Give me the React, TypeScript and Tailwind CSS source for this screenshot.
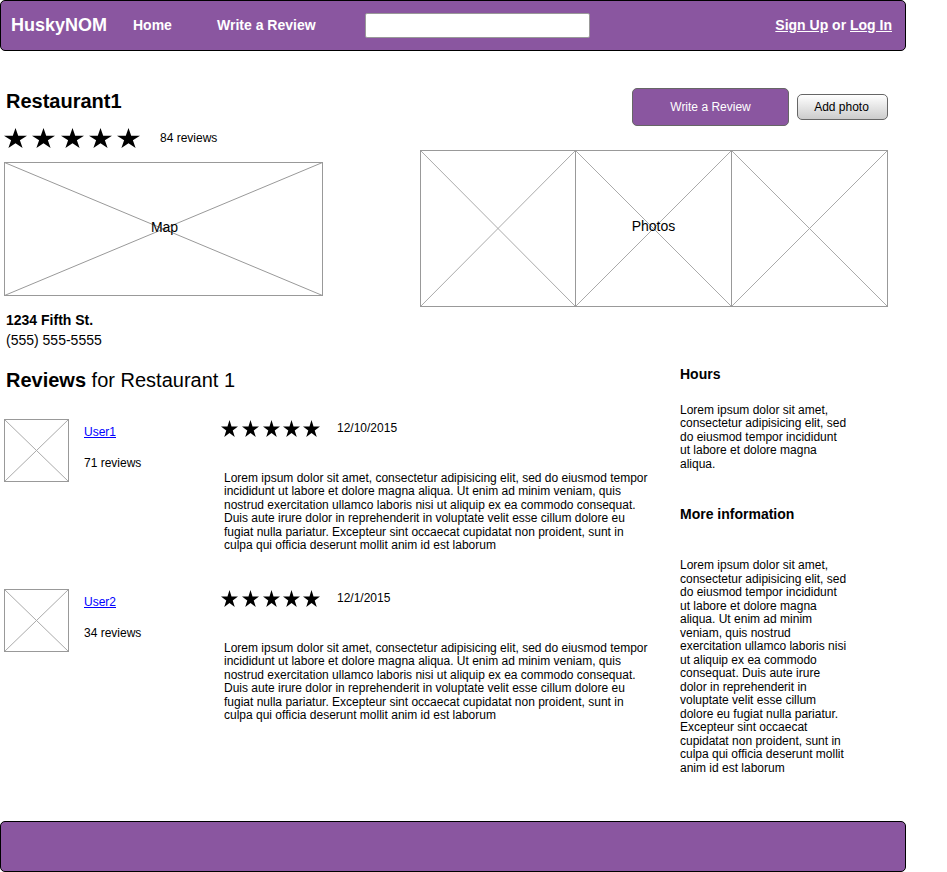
const STAR =
  "50,0 61.8,38.2 100,38.2 69.1,61.8 80.9,100 50,76.4 19.1,100 30.9,61.8 0,38.2 38.2,38.2";

function Star({ className }: { className: string }) {
  return (
    <svg viewBox="0 0 100 100" preserveAspectRatio="none" className={`shrink-0 ${className}`}>
      <polygon points={STAR} fill="#000" />
    </svg>
  );
}

function Placeholder({
  width,
  height,
  cross = "#aaa",
  className = "",
}: {
  width: number;
  height: number;
  cross?: string;
  className?: string;
}) {
  return (
    <svg width={width} height={height} className={`block shrink-0 ${className}`} fill="none">
      <path
        d={`M0.5 0.5L${width - 0.5} ${height - 0.5}M0.5 ${height - 0.5}L${width - 0.5} 0.5`}
        stroke={cross}
      />
      <rect x="0.5" y="0.5" width={width - 1} height={height - 1} stroke="#999" />
    </svg>
  );
}

function Lines({ lines }: { lines: string[] }) {
  return (
    <p className="text-[12px] leading-[13.5px] whitespace-nowrap">
      {lines.map((line) => (
        <span key={line} className="block">
          {line}
        </span>
      ))}
    </p>
  );
}

const reviewText = [
  "Lorem ipsum dolor sit amet, consectetur adipisicing elit, sed do eiusmod tempor",
  "incididunt ut labore et dolore magna aliqua. Ut enim ad minim veniam, quis",
  "nostrud exercitation ullamco laboris nisi ut aliquip ex ea commodo consequat.",
  "Duis aute irure dolor in reprehenderit in voluptate velit esse cillum dolore eu",
  "fugiat nulla pariatur. Excepteur sint occaecat cupidatat non proident, sunt in",
  "culpa qui officia deserunt mollit anim id est laborum",
];

const hoursText = [
  "Lorem ipsum dolor sit amet,",
  "consectetur adipisicing elit, sed",
  "do eiusmod tempor incididunt",
  "ut labore et dolore magna",
  "aliqua.",
];

const infoText = [
  "Lorem ipsum dolor sit amet,",
  "consectetur adipisicing elit, sed",
  "do eiusmod tempor incididunt",
  "ut labore et dolore magna",
  "aliqua. Ut enim ad minim",
  "veniam, quis nostrud",
  "exercitation ullamco laboris nisi",
  "ut aliquip ex ea commodo",
  "consequat. Duis aute irure",
  "dolor in reprehenderit in",
  "voluptate velit esse cillum",
  "dolore eu fugiat nulla pariatur.",
  "Excepteur sint occaecat",
  "cupidatat non proident, sunt in",
  "culpa qui officia deserunt mollit",
  "anim id est laborum",
];

function Review({ user, count, date }: { user: string; count: string; date: string }) {
  return (
    <article className="flex h-[170px] pl-1">
      <Placeholder width={65} height={63} />
      <div className="w-[152px] shrink-0 pt-[5px] pl-[15px] text-[12px]">
        <a href="#" className="block leading-4 text-[#0000ff] underline">
          {user}
        </a>
        <p className="mt-[15px] leading-4">{count}</p>
      </div>
      <div>
        <div className="flex h-[18px] items-center">
          <div className="flex h-[17px] w-[100px] items-center pl-[0.3px]">
            <Star className="h-[17px] w-[17px]" />
            <Star className="ml-1 h-[17px] w-[17px]" />
            <Star className="ml-1 h-[17px] w-[17px]" />
            <Star className="ml-[3px] h-[17px] w-[17px]" />
            <Star className="ml-[3px] h-[17px] w-[17px]" />
          </div>
          <span className="pl-4 text-[12px] leading-4">{date}</span>
        </div>
        <div className="pt-[34.5px] pl-[3px]">
          <Lines lines={reviewText} />
        </div>
      </div>
    </article>
  );
}

export default function App() {
  return (
    <div className="min-h-[872px] bg-white">
      <div className="flex h-[872px] w-[906px] flex-col font-['Liberation_Sans',Arial,sans-serif] text-black">
        <header className="flex h-[51px] shrink-0 items-center rounded-[5px] border border-black bg-[#8a56a0] pl-[10px] pr-[13px] font-bold whitespace-nowrap text-white">
          <a className="w-[122px] text-[18px]">HuskyNOM</a>
          <a className="w-[84px] text-[14px]">Home</a>
          <a className="w-[148px] text-[14px]">Write a Review</a>
          <input className="h-[25px] w-[225px] rounded-[2px] border border-[#999] bg-white" />
          <span className="ml-auto text-[14px]">
            <a className="underline">Sign Up</a> or <a className="underline">Log In</a>
          </span>
        </header>

        <section className="flex h-[304px] shrink-0">
          <div className="w-[420px] pl-1">
            <h1 className="mt-[38px] pl-[2px] text-[20px] leading-6 font-bold">Restaurant1</h1>
            <div className="mt-[15px] flex h-5 items-center pl-[0.4px]">
              <Star className="h-5 w-[23px]" />
              <Star className="ml-[5px] h-5 w-[23px]" />
              <Star className="ml-[6px] h-5 w-[23px]" />
              <Star className="ml-[5px] h-5 w-[23px]" />
              <Star className="ml-[5px] h-5 w-[23px]" />
              <span className="ml-[19.6px] text-[12px]">84 reviews</span>
            </div>
            <div className="mt-[14px] grid w-[319px]">
              <Placeholder width={319} height={134} cross="#999" className="col-start-1 row-start-1" />
              <span className="col-start-1 row-start-1 self-center justify-self-center pb-1 pl-[2px] text-[14px] leading-4">
                Map
              </span>
            </div>
            <div className="mt-[14px] pl-[2px] text-[14px] leading-5">
              <p className="font-bold">1234 Fifth St.</p>
              <p>(555) 555-5555</p>
            </div>
          </div>
          <div className="w-[468px]">
            <div className="mt-[37px] flex h-[38px] items-center justify-end gap-2">
              <button className="h-[38px] w-[157px] rounded-[5px] border border-[#666] bg-[#8a56a0] text-[12px] text-white">
                Write a Review
              </button>
              <button className="h-[26px] w-[91px] rounded-[5px] border border-[#666] bg-linear-to-b from-white to-[#ccc] pr-[2px] text-[12px]">
                Add photo
              </button>
            </div>
            <div className="mt-6 flex">
              <Placeholder width={156} height={157} />
              <div className="-ml-px grid">
                <Placeholder width={157} height={157} className="col-start-1 row-start-1" />
                <span className="col-start-1 row-start-1 self-center justify-self-center pb-[6px] text-[14px] leading-4">
                  Photos
                </span>
              </div>
              <Placeholder width={157} height={157} className="-ml-px" />
            </div>
          </div>
        </section>

        <main className="flex h-[466px] shrink-0">
          <section className="w-[680px]">
            <h2 className="mt-[13px] mb-[27px] pl-[6px] text-[20px] leading-6">
              <b>Reviews</b> for Restaurant 1
            </h2>
            <Review user="User1" count="71 reviews" date="12/10/2015" />
            <Review user="User2" count="34 reviews" date="12/1/2015" />
          </section>
          <aside>
            <h3 className="mt-[11px] mb-[21.5px] text-[14px] leading-4 font-bold">Hours</h3>
            <Lines lines={hoursText} />
            <h3 className="mt-[35px] mb-[37px] text-[14px] leading-4 font-bold">More information</h3>
            <Lines lines={infoText} />
          </aside>
        </main>

        <footer className="h-[51px] shrink-0 rounded-[5px] border border-black bg-[#8a56a0]" />
      </div>
    </div>
  );
}
